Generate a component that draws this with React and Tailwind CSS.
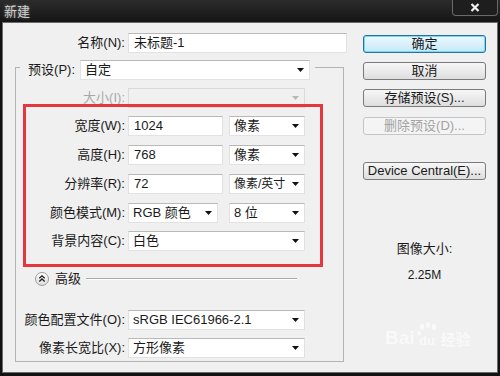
import React from 'react';

const FONT = "font-['Liberation_Sans','Noto_Sans_CJK_SC',sans-serif]";

function Arrow({ disabled }) {
  return (
    <svg width="7" height="4" viewBox="0 0 7 4" className="ml-auto mr-[5px] shrink-0">
      <path d="M0 0h7L3.5 4z" fill={disabled ? '#b8b8b8' : '#111'} />
    </svg>
  );
}

function Field({ w, children }) {
  return (
    <div
      className={`${w} h-[20px] flex items-center pl-[5px] bg-white border border-[#e2e2e2] border-t-[#b9b9b9] text-[13px] text-[#1a1a1a]`}
    >
      {children}
    </div>
  );
}

function Select({ w, children, disabled, tight }) {
  return (
    <div
      className={`${w} h-[20px] flex items-center pl-[4px] border text-[13px] ${
        disabled
          ? 'bg-[#f0f0f0] border-[#d9d9d9] text-[#a6a6a6]'
          : 'bg-white border-[#e2e2e2] border-t-[#b9b9b9] text-[#1a1a1a]'
      }`}
    >
      <span className={`whitespace-nowrap ${tight ? 'text-[12px]' : ''}`}>{children}</span>
      <Arrow disabled={disabled} />
    </div>
  );
}

function Row({ label, children, disabled, className = '' }) {
  return (
    <div className={`flex items-center ${className}`}>
      <div
        className={`w-[112px] text-right text-[13px] whitespace-nowrap pr-[3px] ${
          disabled ? 'text-[#a8a8a8]' : 'text-[#1a1a1a]'
        }`}
      >
        {label}
      </div>
      {children}
    </div>
  );
}

function Button({ children, variant, className = '' }) {
  const styles = {
    primary:
      'border-[#2b6f9e] bg-linear-to-b from-[#eef8fd] to-[#c5e8f8] shadow-[inset_0_0_0_1px_#6fdcf8] text-[#1a1a1a]',
    disabled: 'border-[#c3c6c8] bg-[#f4f4f4] text-[#a3a3a3]',
    normal: 'border-[#7a7a7a] bg-linear-to-b from-[#f7f7f7] to-[#dedede] text-[#1a1a1a]',
  };
  return (
    <div
      className={`h-[18px] rounded-[3px] border flex items-center justify-center text-[13px] whitespace-nowrap ${
        styles[variant || 'normal']
      } ${className}`}
    >
      {children}
    </div>
  );
}

export default function App() {
  return (
    <div className={`w-[500px] h-[376px] bg-[#121212] flex flex-col overflow-hidden ${FONT}`}>
      {/* title bar */}
      <div className="h-[22px] flex items-start bg-linear-to-b from-[#2c2c2c] to-[#151515]">
        <div className="pl-[4px] pt-[2px] text-[13px] text-[#cfcfcf] [text-shadow:0_0_3px_#777]">新建</div>
        <div className="ml-auto mr-[2px] w-[46px] h-[16px] border border-t-0 border-[#6a6a6a] rounded-b-[4px] bg-[#1e1e1e] flex items-center justify-center">
          <svg width="10" height="9" viewBox="0 0 10 9">
            <path d="M1.5 1l7 7M8.5 1l-7 7" stroke="#f2f2f2" strokeWidth="2.2" />
          </svg>
        </div>
      </div>

      {/* body */}
      <div className="flex-1 mx-[2px] mb-[3px] bg-[#f0f0f0] border border-[#6a6a6a] relative flex">
        {/* left column */}
        <div className="w-[350px] flex flex-col pt-[10px]">
          <div className="flex items-center">
            <div className="w-[125px] text-right pr-[3px] text-[13px] text-[#1a1a1a]">名称(N):</div>
            <Field w="w-[219px]">未标题-1</Field>
          </div>

          <fieldset className="ml-[12px] w-[329px] border border-[#b4b4b4] pb-[3px] mt-[1px]">
            <legend className="ml-[4px] pt-[6px]">
              <div className="flex items-center pr-[5px]">
                <div className="w-[60px] text-right text-[13px] text-[#1a1a1a] pr-[5px]">预设(P):</div>
                <Select w="w-[230px]">自定</Select>
              </div>
            </legend>

            <Row label="大小(I):" disabled className="mt-[8px]">
              <Select w="w-[177px]" disabled />
            </Row>
            <Row label="宽度(W):" className="mt-[8px]">
              <Field w="w-[95px]">1024</Field>
              <div className="w-[6px]" />
              <Select w="w-[76px]">像素</Select>
            </Row>
            <Row label="高度(H):" className="mt-[9px]">
              <Field w="w-[95px]">768</Field>
              <div className="w-[6px]" />
              <Select w="w-[76px]">像素</Select>
            </Row>
            <Row label="分辨率(R):" className="mt-[9px]">
              <Field w="w-[95px]">72</Field>
              <div className="w-[6px]" />
              <Select w="w-[76px]" tight>像素/英寸</Select>
            </Row>
            <Row label="颜色模式(M):" className="mt-[9px]">
              <Select w="w-[90px]">RGB 颜色</Select>
              <div className="w-[11px]" />
              <Select w="w-[76px]">8 位</Select>
            </Row>
            <Row label="背景内容(C):" className="mt-[8px]">
              <Select w="w-[177px]">白色</Select>
            </Row>

            <div className="flex items-center mt-[18px] ml-[19px]">
              <svg width="14" height="14" viewBox="0 0 14 14">
                <defs>
                  <linearGradient id="g" x1="0" y1="0" x2="0" y2="1">
                    <stop offset="0" stopColor="#ffffff" />
                    <stop offset="1" stopColor="#dcdcdc" />
                  </linearGradient>
                </defs>
                <circle cx="7" cy="7" r="6.5" fill="url(#g)" stroke="#9a9a9a" />
                <path d="M4.3 6.3L7 3.8l2.7 2.5M4.3 9.5L7 7l2.7 2.5" fill="none" stroke="#222" strokeWidth="1.3" />
              </svg>
              <span className="ml-[6px] text-[13px] text-[#1a1a1a]">高级</span>
              <div className="ml-[5px] w-[211px] h-[2px] border-t border-[#a8a8a8] border-b border-b-white" />
            </div>

            <Row label="颜色配置文件(O):" className="mt-[21px]">
              <Select w="w-[177px]">sRGB IEC61966-2.1</Select>
            </Row>
            <Row label="像素长宽比(X):" className="mt-[8px]">
              <Select w="w-[177px]">方形像素</Select>
            </Row>
          </fieldset>
        </div>

        {/* right column */}
        <div className="ml-[10px] w-[123px] flex flex-col pt-[12px]">
          <Button variant="primary">确定</Button>
          <Button className="mt-[9px]">取消</Button>
          <Button className="mt-[9px]">存储预设(S)...</Button>
          <Button variant="disabled" className="mt-[10px]">删除预设(D)...</Button>
          <Button className="mt-[27px] text-[12px]">Device Central(E)...</Button>
          <div className="mt-[61px] text-center text-[13px] leading-[16px] text-[#1a1a1a]">图像大小:</div>
          <div className="mt-[10px] text-center text-[12px] leading-[16px] text-[#1a1a1a]">2.25M</div>
        </div>

        {/* red annotation box */}
        <div className="absolute left-[20px] top-[81px] w-[300px] h-[163px] border-[3px] border-[#e6363f] pointer-events-none" />

        {/* watermark */}
        <div className="absolute left-[382px] top-[298px] flex items-end text-white opacity-60 pointer-events-none">
          <span className="text-[19px] font-bold leading-none">Bai</span>
          <svg width="24" height="26" viewBox="0 0 24 26" className="mx-[1px]">
            <g fill="#ffffff">
              <ellipse cx="6" cy="6" rx="2.3" ry="3" />
              <ellipse cx="12" cy="4" rx="2.3" ry="3" />
              <ellipse cx="18" cy="6" rx="2.3" ry="3" />
              <ellipse cx="3" cy="12" rx="2" ry="2.6" />
            </g>
            <text x="3" y="24" fontSize="13" fontWeight="700" fill="#ffffff" fontFamily="Liberation Sans">du</text>
          </svg>
          <span className="text-[15px] font-bold leading-none">经验</span>
        </div>
      </div>
    </div>
  );
}
